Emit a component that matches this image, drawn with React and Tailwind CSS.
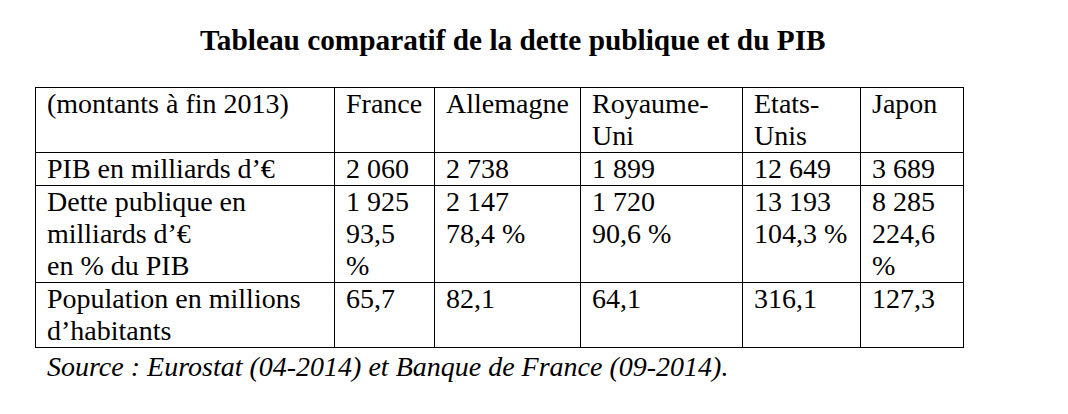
const rows = [
  {
    label: ["(montants à fin 2013)"],
    cells: [["France"], ["Allemagne"], ["Royaume-", "Uni"], ["Etats-", "Unis"], ["Japon"]],
  },
  {
    label: ["PIB en milliards d’€"],
    cells: [["2 060"], ["2 738"], ["1 899"], ["12 649"], ["3 689"]],
  },
  {
    label: ["Dette publique en", "milliards d’€", "en % du PIB"],
    cells: [
      ["1 925", "93,5", "%"],
      ["2 147", "78,4 %"],
      ["1 720", "90,6 %"],
      ["13 193", "104,3 %"],
      ["8 285", "224,6", "%"],
    ],
  },
  {
    label: ["Population en millions", "d’habitants"],
    cells: [["65,7"], ["82,1"], ["64,1"], ["316,1"], ["127,3"]],
  },
];

function Cell({ lines }) {
  return (
    <div className="border-r border-b border-black pl-[11px] whitespace-nowrap">
      {lines.map((l, i) => (
        <div key={i}>{l}</div>
      ))}
    </div>
  );
}

export default function App() {
  return (
    <div className="w-[1068px] h-[414px] bg-white text-black font-[Liberation_Serif,serif] overflow-hidden">
      <div className="pt-[24px] pl-[200px] text-[29.3px] leading-[32px] font-bold">
        Tableau comparatif de la dette publique et du PIB
      </div>

      <div className="mt-[31px] ml-[35px] text-[28px] leading-[32px]">
        <div className="grid w-[929px] grid-cols-[299px_100px_146px_162px_118px_103px] border-l border-t border-black">
          {rows.map((row, r) => (
            <div key={r} className="contents">
              <Cell lines={row.label} />
              {row.cells.map((c, i) => (
                <Cell key={i} lines={c} />
              ))}
            </div>
          ))}
        </div>
        <div className="pt-[3px] pl-[12px] italic">
          Source : Eurostat (04-2014) et Banque de France (09-2014).
        </div>
      </div>
    </div>
  );
}
